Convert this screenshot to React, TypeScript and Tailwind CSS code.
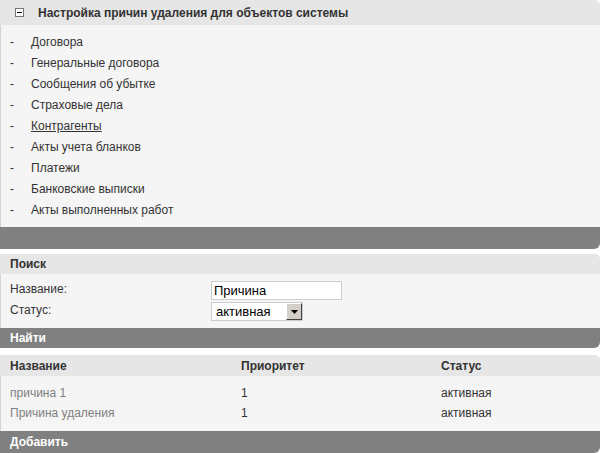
import React from 'react';

const objects = [
  'Договора',
  'Генеральные договора',
  'Сообщения об убытке',
  'Страховые дела',
  'Контрагенты',
  'Акты учета бланков',
  'Платежи',
  'Банковские выписки',
  'Акты выполненных работ',
];

const reasons = [
  { name: 'причина 1', priority: '1', status: 'активная' },
  { name: 'Причина удаления', priority: '1', status: 'активная' },
];

const SectionHeader: React.FC<{ children: React.ReactNode; className?: string }> = ({ children, className = '' }) => (
  <div className={`flex items-center bg-[#e6e6e6] rounded-tr-[5px] font-bold text-[#333] ${className}`}>{children}</div>
);

const DarkBar: React.FC<{ children?: React.ReactNode; className?: string }> = ({ children, className = '' }) => (
  <div className={`flex items-center bg-[#808080] rounded-br-[6px] pl-[10px] font-bold text-white ${className}`}>{children}</div>
);

export default function App() {
  return (
    <div className="w-[600px] bg-white text-[12px] text-[#333] font-['Liberation_Sans',Arial,sans-serif]">
      {/* Objects */}
      <SectionHeader className="h-[25px] pl-[15px]">
        <div className="w-[9px] h-[9px] border border-[#777] bg-white flex items-center justify-center">
          <div className="w-[5px] h-[1px] bg-black" />
        </div>
        <span className="ml-[14px]">Настройка причин удаления для объектов системы</span>
      </SectionHeader>
      <div className="bg-[#f5f5f5] border-l border-[#d4d4d4] pt-[6px] pb-[7px]">
        {objects.map((o) => (
          <div key={o} className="flex h-[21px] items-center">
            <span className="w-[30px] pl-[9px]">-</span>
            <span className={o === 'Контрагенты' ? 'underline' : ''}>{o}</span>
          </div>
        ))}
      </div>
      <DarkBar className="h-[22px]" />

      {/* Search */}
      <SectionHeader className="mt-[5px] h-[20px] pl-[10px]">Поиск</SectionHeader>
      <div className="bg-[#f5f5f5] border-l border-[#d4d4d4] pt-[7px] pb-[6px]">
        <div className="flex h-[21px] items-start">
          <span className="w-[210px] pl-[9px] leading-[16px]">Название:</span>
          <div className="w-[131px] h-[19px] border border-[#ccc] bg-white px-[2px] leading-[17px] text-[13px] text-black">
            Причина
          </div>
        </div>
        <div className="flex h-[20px] items-start">
          <span className="w-[210px] pl-[9px] leading-[16px]">Статус:</span>
          <div className="flex w-[92px] h-[19px] border border-[#ccc] bg-white text-[13px] text-black">
            <span className="flex-1 pl-[4px] leading-[17px]">активная</span>
            <div className="w-[16px] h-[17px] bg-[#d4d0c8] border-t border-l border-t-white border-l-white border-r border-b border-r-[#404040] border-b-[#404040] flex items-center justify-center">
              <svg width="7" height="4" viewBox="0 0 7 4">
                <path d="M0 0h7L3.5 4z" fill="#000" />
              </svg>
            </div>
          </div>
        </div>
      </div>
      <DarkBar className="h-[20px]">Найти</DarkBar>

      {/* Results */}
      <SectionHeader className="mt-[7px] h-[21px] pl-[10px]">
        <span className="w-[231px]">Название</span>
        <span className="w-[200px]">Приоритет</span>
        <span>Статус</span>
      </SectionHeader>
      <div className="bg-[#f5f5f5] border-l border-[#d4d4d4] pt-[7px] pb-[8px]">
        {reasons.map((r) => (
          <div key={r.name} className="flex h-[20px] items-center pl-[9px]">
            <span className="w-[231px] text-[#808080]">{r.name}</span>
            <span className="w-[200px]">{r.priority}</span>
            <span>{r.status}</span>
          </div>
        ))}
      </div>
      <DarkBar className="h-[22px]">Добавить</DarkBar>
    </div>
  );
}
